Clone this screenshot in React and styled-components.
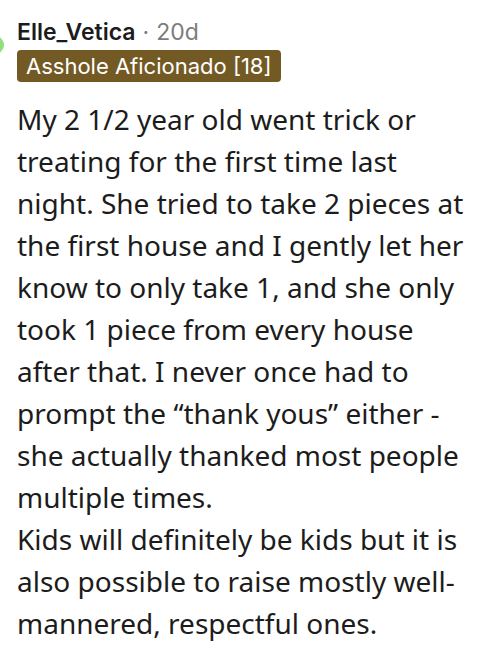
import React from 'react';
import styled, { createGlobalStyle } from 'styled-components';

const GlobalStyle = createGlobalStyle`
    html, body {
        margin: 0;
        padding: 0;
        background: #ffffff;
    }
`;

const App = () => {
    return (
        <>
            <GlobalStyle />
            <StComment>
                <StAvatarLine />
                <StHeader>
                    <StMeta>
                        <StAuthor>Elle_Vetica</StAuthor>
                        <StDot>·</StDot>
                        <StTime>20d</StTime>
                    </StMeta>
                    <StFlair>Asshole Aficionado [18]</StFlair>
                </StHeader>
                <StBody>
                    <p>
                        My 2 1/2 year old went trick or treating for the first time last night. She tried to take 2 pieces at the first house and I gently let her know to only take 1, and she only took 1 piece from every house after that. I never once had to prompt the “thank yous” either - she actually thanked most people multiple times.
                    </p>
                    <p>
                        Kids will definitely be kids but it is also possible to raise mostly well-mannered, respectful ones.
                    </p>
                </StBody>
            </StComment>
        </>
    );
};

export default App;

const StComment = styled.div`
    position: relative;
    width: 490px;
    height: 662px;
    overflow: hidden;
    padding: 16px 10px 0 17px;
    box-sizing: border-box;
`;

const StAvatarLine = styled.div`
    position: absolute;
    left: -14px;
    top: 36px;
    width: 18px;
    height: 18px;
    border-radius: 50%;
    background: #8ee07a;
`;

const StHeader = styled.div`
    display: flex;
    flex-direction: column;
    align-items: flex-start;
    gap: 2px;
`;

const StMeta = styled.div`
    display: flex;
    align-items: baseline;
    font-family: Inter, "Noto Sans", sans-serif;
    font-size: 23px;
    line-height: 32px;
`;

const StAuthor = styled.span`
    font-weight: 600;
    color: #1c1c1c;
`;

const StDot = styled.span`
    color: #7c7c7c;
    margin: 0 7px;
`;

const StTime = styled.span`
    color: #7c7c7c;
`;

const StFlair = styled.span`
    display: inline-block;
    background: #735a25;
    color: #ffffff;
    font-family: Inter, "Noto Sans", sans-serif;
    font-size: 22px;
    line-height: 32px;
    padding: 0 9px;
    border-radius: 4px;
`;

const StBody = styled.div`
    margin-top: 16px;
    font-family: "Noto Sans", "Open Sans", sans-serif;
    font-size: 28px;
    line-height: 42px;
    color: #1c1c1c;

    & > p {
        margin: 0;
    }
`;
